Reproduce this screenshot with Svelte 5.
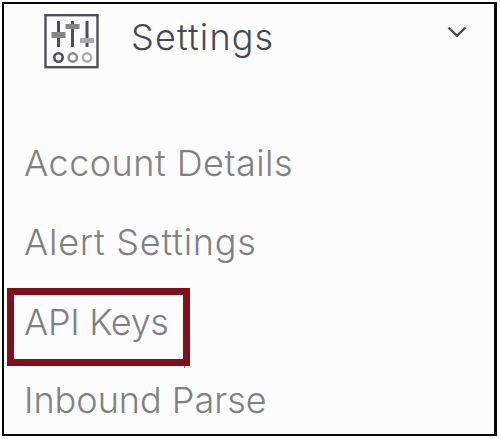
<script>
  const items = [
    { label: 'Account Details', spacing: 0.48 },
    { label: 'Alert Settings', spacing: 0.75 },
    { label: 'API Keys', spacing: -0.3, active: true },
    { label: 'Inbound Parse', spacing: 0 }
  ];
</script>

<nav class="panel">
  <header>
    <svg class="icon" width="55" height="55" viewBox="0 0 55 55" fill="none">
      <rect x="1.5" y="1.2" width="52" height="52" stroke="#4d5059" stroke-width="2.4" />
      <path d="M14.500 7v26M28.500 7v26M43 7v26" stroke="#4d4f57" stroke-width="3" />
      <path d="M7.500 21h14" stroke="#858585" stroke-width="6" />
      <path d="M21.500 12.500h14" stroke="#858585" stroke-width="5" />
      <path d="M36 26.500h14" stroke="#aaa" stroke-width="5" />
      <circle cx="14.500" cy="43.500" r="4.200" stroke="#4d5059" stroke-width="2.600" />
      <circle cx="28.800" cy="43.500" r="4.200" stroke="#888" stroke-width="2.400" />
      <circle cx="43" cy="43.500" r="4.200" stroke="#aaa" stroke-width="2.400" />
    </svg>
    <h1>Settings</h1>
    <svg class="chevron" width="20" height="12" viewBox="0 0 20 12" fill="none">
      <path d="M1.500 1.500L10 9.800L18.500 1.500" stroke="#484b54" stroke-width="2.400" />
    </svg>
  </header>
  <ul>
    {#each items as item}
      <li class:active={item.active}><span style:letter-spacing="{item.spacing}px">{item.label}</span></li>
    {/each}
  </ul>
</nav>

<style>
  :global(body) { margin: 0; background: #fff; overflow: hidden; }
  .panel {
    box-sizing: border-box;
    width: 495px;
    height: 434px;
    margin: 2px 0 0 2px;
    border: 2px solid #08080a;
    border-right-width: 3px;
    background: #fcfcfc;
    font-family: Inter, "Liberation Sans", sans-serif;
    font-weight: 300;
  }
  header {
    display: flex;
    align-items: flex-start;
    height: 119px;
    padding: 10px 27px 0 40px;
    box-sizing: border-box;
  }
  .icon { flex: none; }
  h1 {
    margin: 1px 0 0 32px;
    font-size: 36px;
    line-height: 44px;
    font-weight: 300;
    letter-spacing: 1.15px;
    color: #464953;
  }
  .chevron { margin: 12px 0 0 auto; }
  ul { margin: 0; padding: 0; list-style: none; }
  li {
    position: relative;
    height: 79.200px;
    padding-left: 20px;
    box-sizing: border-box;
    display: flex;
    align-items: center;
    color: #808083;
    font-size: 36px;
    line-height: 44px;
    white-space: nowrap;
  }
  .active { padding-top: 2px; }
  .active::before {
    content: "";
    position: absolute;
    left: 3px;
    top: 7px;
    width: 183px;
    height: 78px;
    box-sizing: border-box;
    border: 7px solid #80111c;
  }
  .active::after {
    content: "";
    position: absolute;
    left: 180px;
    top: 85px;
    width: 1px;
    height: 2px;
    background: #62656b;
  }
</style>
